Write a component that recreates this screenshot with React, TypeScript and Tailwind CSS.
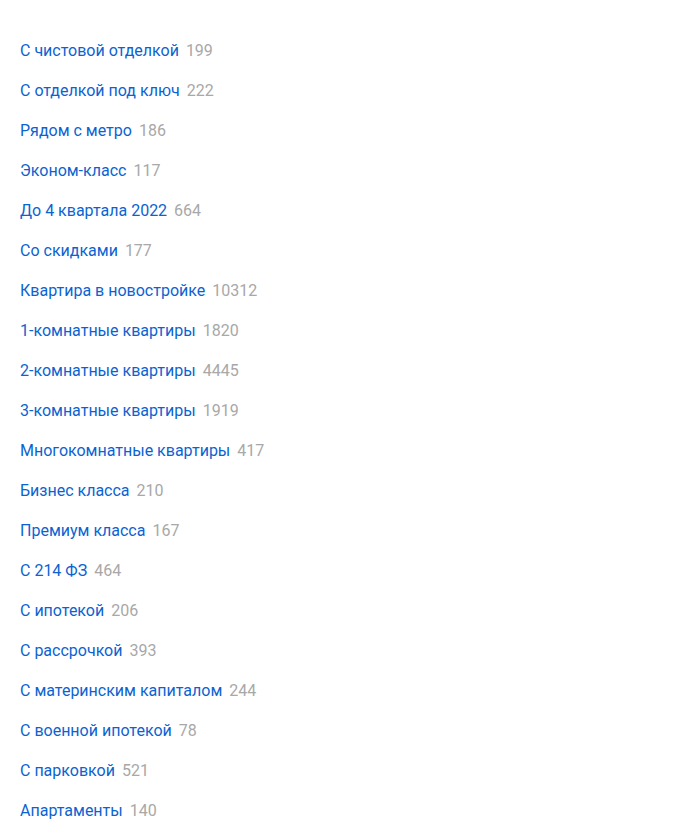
const items: [string, number][] = [
  ["С чистовой отделкой", 199],
  ["С отделкой под ключ", 222],
  ["Рядом с метро", 186],
  ["Эконом-класс", 117],
  ["До 4 квартала 2022", 664],
  ["Со скидками", 177],
  ["Квартира в новостройке", 10312],
  ["1-комнатные квартиры", 1820],
  ["2-комнатные квартиры", 4445],
  ["3-комнатные квартиры", 1919],
  ["Многокомнатные квартиры", 417],
  ["Бизнес класса", 210],
  ["Премиум класса", 167],
  ["С 214 ФЗ", 464],
  ["С ипотекой", 206],
  ["С рассрочкой", 393],
  ["С материнским капиталом", 244],
  ["С военной ипотекой", 78],
  ["С парковкой", 521],
  ["Апартаменты", 140],
];

export default function App() {
  return (
    <div className="min-h-[840px] bg-white pt-[31px] px-5" style={{ fontFamily: "Roboto, 'Open Sans', sans-serif" }}>
      <ul className="flex flex-col">
        {items.map(([t, n]) => (
          <li key={t} className="h-10 flex items-center text-[16px]">
            <a className="text-[#0b63d1]">{t}</a>
            <span className="ml-[7px] text-[#a8a8a8]">{n}</span>
          </li>
        ))}
      </ul>
    </div>
  );
}
